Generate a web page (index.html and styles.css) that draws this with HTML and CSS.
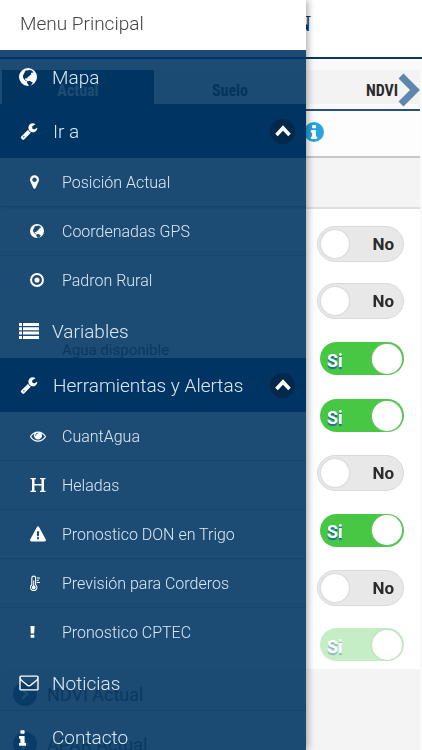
FILE: index.html
```
<!DOCTYPE html>
<html lang="es">
<head>
    <meta charset="UTF-8">
    <meta name="viewport" content="width=device-width, initial-scale=1.0">
    <title>Menu Principal</title>
    <link rel="stylesheet" href="styles.css">
</head>
<body>
    <svg class="sprite" aria-hidden="true">
        <symbol id="globe" viewBox="0 0 16 16"><path fill-rule="evenodd" d="M8 0a8 8 0 1 0 0 16A8 8 0 0 0 8 0zM9.600 1.700l1.700.6 1.600 1.400-.6.5-1-.1-.7.9.6.7-1.200.4-.8 1.200-1.300.5-.6 1 .1 1-.7-.7-1.200.1-.2 1.200 1 .3.6.9 1.100.2 1.500-.4 1.800 1 .9.3-.5 1.200-.8 1.100-2.200.9-.6-1.400-1-1.100.1-1.300-1.500-.9-1.300-1.300-.9-2 .2-1.700L5 4.100l.2-1 1.300-1.200 1 .3z"/></symbol>
        <symbol id="wrench" viewBox="0 0 1792 1792"><path d="M448 1472q0-26-19-45t-45-19-45 19-19 45 19 45 45 19 45-19 19-45zm644-420l-682 682q-37 37-90 37-52 0-91-37l-106-108q-38-36-38-90 0-53 38-91l681-681q39 98 114.500 173.500t173.500 114.500zm634-435q0 39-23 106-47 134-164.500 217.500t-258.500 83.500q-185 0-316.500-131.500t-131.500-316.500 131.500-316.500 316.500-131.500q58 0 121.500 16.500t107.500 46.500q16 11 16 28t-16 28l-293 169v224l193 107q5-3 79-48.500t135.500-81 70.500-35.500q15 0 23.500 10t8.500 25z"/></symbol>
        <symbol id="marker" viewBox="384 128 1024 1536"><path d="M1152 640q0-106-75-181t-181-75-181 75-75 181 75 181 181 75 181-75 75-181zm256 0q0 109-33 179l-364 774q-16 33-47.500 52t-67.500 19-67.500-19-46.500-52l-365-774q-33-70-33-179 0-212 150-362t362-150 362 150 150 362z"/></symbol>
        <symbol id="target" viewBox="0 0 16 16"><circle cx="8" cy="8" r="6.800" fill="none" stroke="currentColor" stroke-width="2.300"/><circle cx="8" cy="8" r="2.900"/></symbol>
        <symbol id="list" viewBox="0 0 20 16"><path d="M0 0h3v3H0zM4 0h16v3H4zM0 4.300h3v3H0zM4 4.300h16v3H4zM0 8.600h3v3H0zM4 8.600h16v3H4zM0 13h3v3H0zM4 13h16v3H4z"/></symbol>
        <symbol id="eye" viewBox="0 0 1792 1792"><path d="M1664 960q-152-236-381-353 61 104 61 225 0 185-131.500 316.500t-316.500 131.500-316.500-131.500-131.500-316.500q0-121 61-225-229 117-381 353 133 205 333.500 326.500t434.500 121.500 434.500-121.500 333.500-326.500zm-720-384q0-20-14-34t-34-14q-125 0-214.500 89.500t-89.500 214.500q0 20 14 34t34 14 34-14 14-34q0-86 61-147t147-61q20 0 34-14t14-34zm848 384q0 34-20 69-140 230-376.500 368.500t-499.500 138.500-499.500-139-376.500-368q-20-35-20-69t20-69q140-229 376.500-368t499.500-139 499.500 139 376.500 368q20 35 20 69z"/></symbol>
        <symbol id="frost" viewBox="0 0 16 16"><path d="M.5 1H6v1.300H4.500V7h7V2.300H10V1h5.500v1.300H14v11.400h1.500V15H10v-1.300h1.500V8.500h-7v5.200H6V15H.5v-1.300H2V2.300H.5z"/></symbol>
        <symbol id="warning" viewBox="0 0 16 16"><path fill-rule="evenodd" d="M8 .3q.7 0 1 .6l6.800 12.700q.5 1.700-1 1.800H1.200q-1.500-.1-1-1.800L7 .9q.3-.6 1-.6zM6.800 5.200l.3 5h1.800l.3-5zM7 11.200v2h2v-2z"/></symbol>
        <symbol id="thermometer" viewBox="0 0 10 16"><path d="M1.800 9.300V2.500a1.900 1.900 0 0 1 3.800 0v6.800a3.200 3.200 0 1 1-3.800 0z" fill="none" stroke="currentColor" stroke-width="1.100"/><circle cx="3.700" cy="12" r="1.900"/><path d="M3.200 5h1v6h-1zM6.700 2H10v1H6.700zM6.700 4.300H9v1H6.700zM6.700 6.600H10v1H6.700z"/></symbol>
        <symbol id="exclamation" viewBox="0 0 6 16"><path d="M.5.800h5l-.5 9H1zM.8 11.300h4.400V15H.8z"/></symbol>
        <symbol id="envelope" viewBox="0 128 1792 1664"><path d="M1664 1504v-768q-32 36-69 66-268 206-426 338-51 43-83 67t-86.500 48.500-102.500 24.500h-2q-48 0-102.500-24.500t-86.500-48.500-83-67q-158-132-426-338-37-30-69-66v768q0 13 9.500 22.500t22.500 9.500h1472q13 0 22.500-9.500t9.500-22.500zm0-1051v-24.500l-.5-13-3-12.500-5.500-9-9-7.500-14-2.500h-1472q-13 0-22.500 9.500t-9.500 22.500q0 168 147 284 193 152 401 317 6 5 35 29.500t46 37.500 44.500 31.500 50.500 27.500 43 9h2q20 0 43-9t50.500-27.500 44.500-31.500 46-37.500 35-29.500q208-165 401-317 54-43 100.500-115.500t46.500-131.500zm128-37v1088q0 66-47 113t-113 47h-1472q-66 0-113-47t-47-113v-1088q0-66 47-113t113-47h1472q66 0 113 47t47 113z"/></symbol>
        <symbol id="info" viewBox="576 128 640 1408"><path d="M1216 1344v128q0 26-19 45t-45 19h-512q-26 0-45-19t-19-45v-128q0-26 19-45t45-19h64v-384h-64q-26 0-45-19t-19-45v-128q0-26 19-45t45-19h384q26 0 45 19t19 45v576h64q26 0 45 19t19 45zm-128-1152v192q0 26-19 45t-45 19h-256q-26 0-45-19t-19-45v-192q0-26 19-45t45-19h256q26 0 45 19t19 45z"/></symbol>
        <symbol id="chevron-up" viewBox="0 0 16 12"><path d="M1.500 10L8 3l6.500 7" fill="none" stroke="currentColor" stroke-width="3.600"/></symbol>
        <symbol id="chevron-right" viewBox="0 0 22 34"><path d="M3 3l14 14L3 31" fill="none" stroke="currentColor" stroke-width="7"/></symbol>
    </svg>

    <div class="page">
        <header class="header"><h1 class="title">N</h1></header>
        <nav class="tabs">
            <button type="button" class="tab active">Actual</button>
            <button type="button" class="tab">Suelo</button>
            <button type="button" class="tab">NDVI</button>
            <button type="button" class="next" aria-label="Siguiente"><svg><use href="#chevron-right"/></svg></button>
        </nav>
        <div class="inforow"><button type="button" class="infobtn" aria-label="Ayuda"><svg><use href="#info"/></svg></button></div>
        <div class="band"></div>
        <form class="switches">
            <label class="switch"><input type="checkbox"><span class="state">No</span></label>
            <label class="switch"><input type="checkbox"><span class="state">No</span></label>
            <label class="switch on"><span class="name">Agua disponible</span><input type="checkbox" checked><span class="state">Si</span></label>
            <label class="switch on"><input type="checkbox" checked><span class="state">Si</span></label>
            <label class="switch"><input type="checkbox"><span class="state">No</span></label>
            <label class="switch on"><input type="checkbox" checked><span class="state">Si</span></label>
            <label class="switch"><input type="checkbox"><span class="state">No</span></label>
            <label class="switch on disabled"><input type="checkbox" checked disabled><span class="state">Si</span></label>
        </form>
        <div class="layers">
            <a class="layer" href="#ndvi"><span class="bullet"><svg><use href="#chevron-right"/></svg></span>NDVI Actual</a>
            <a class="layer" href="#apar"><span class="bullet"><svg><use href="#chevron-right"/></svg></span>APAR Actual</a>
        </div>
    </div>

    <aside class="drawer">
        <h2 class="drawertitle">Menu Principal</h2>
        <nav class="menu">
            <a class="item" href="#mapa"><svg class="icon round"><use href="#globe"/></svg>Mapa</a>
            <button type="button" class="item group" aria-expanded="true"><svg class="icon"><use href="#wrench"/></svg>Ir a<span class="toggle"><svg><use href="#chevron-up"/></svg></span></button>
            <div class="submenu">
                <a class="subitem" href="#posicion"><svg class="icon narrow"><use href="#marker"/></svg>Posición Actual</a>
                <a class="subitem" href="#coordenadas"><svg class="icon"><use href="#globe"/></svg>Coordenadas GPS</a>
                <a class="subitem" href="#padron"><svg class="icon"><use href="#target"/></svg>Padron Rural</a>
            </div>
            <a class="item" href="#variables"><svg class="icon"><use href="#list"/></svg>Variables</a>
            <button type="button" class="item group" aria-expanded="true"><svg class="icon"><use href="#wrench"/></svg>Herramientas y Alertas<span class="toggle"><svg><use href="#chevron-up"/></svg></span></button>
            <div class="submenu">
                <a class="subitem" href="#cuantagua"><svg class="icon wide"><use href="#eye"/></svg>CuantAgua</a>
                <a class="subitem" href="#heladas"><svg class="icon wide"><use href="#frost"/></svg>Heladas</a>
                <a class="subitem" href="#don"><svg class="icon wide"><use href="#warning"/></svg>Pronostico DON en Trigo</a>
                <a class="subitem" href="#corderos"><svg class="icon tall"><use href="#thermometer"/></svg>Previsión para Corderos</a>
                <a class="subitem" href="#cptec"><svg class="icon mark"><use href="#exclamation"/></svg>Pronostico CPTEC</a>
            </div>
            <a class="item" href="#noticias"><svg class="icon"><use href="#envelope"/></svg>Noticias</a>
            <a class="item line" href="#contacto"><svg class="icon narrow"><use href="#info"/></svg>Contacto</a>
        </nav>
    </aside>
</body>
</html>
```
FILE: styles.css
```
* { box-sizing: border-box; }
body { margin: 0; height: 100vh; overflow: hidden; background: #fafafa; font-family: Roboto, sans-serif; color: #2b2b2b; }
button { border: 0; padding: 0; background: none; font: inherit; color: inherit; }
a { color: inherit; text-decoration: none; }
svg { display: block; fill: currentColor; }
.sprite { display: none; }

/* page */
.header { height: 59px; border-bottom: 2px solid #003a66; background: #fff; display: flex; justify-content: center; }
.title { width: 200px; margin: 0; text-align: right; font: bold 24px/46px "Liberation Serif", serif; color: #0d3a63; }
.tabs { position: relative; display: flex; margin: 0 2px; padding: 11px 0 5px; border-bottom: 2px solid #28527c; overflow: hidden; }
.tab { flex: 0 0 152px; height: 34px; padding-top: 6px; background: #f3f3f3; font: bold 16px "Roboto Condensed", Roboto, sans-serif; }
.tab.active { background: #003a66; color: #fff; }
.next { position: absolute; right: 0; top: 14px; color: #5d87ad; }
.next svg { width: 22px; height: 34px; }
.inforow { margin: 0 2px; height: 47px; padding: 11px 0 0 302px; border-bottom: 2px solid #c8c8c8; background: #fdfdfd; }
.infobtn { display: flex; align-items: center; justify-content: center; width: 20px; height: 20px; border-radius: 50%; background: #27a5dc; color: #fff; }
.infobtn svg { width: 8px; height: 14px; }
.band { margin: 0 2px; height: 51px; background: #f4f4f4; border-bottom: 2px solid #dedede; }
.switches { display: flex; flex-direction: column; justify-content: space-between; min-height: 460px; margin: 0 2px; padding: 17px 16px 6px 60px; background: #fff; }
.switch { display: grid; grid-template-columns: 1fr 87px; align-items: center; justify-items: end; height: 36px; font-size: 17px; font-weight: bold; }
.switch input { grid-area: 1 / 2; appearance: none; display: flex; align-items: center; width: 87px; height: 36px; margin: 0; padding: 0 3px; border: 1px solid #dadada; border-radius: 18px; background: #e8e8e8; }
.switch input::before { content: ""; width: 28px; height: 28px; border-radius: 50%; background: #fff; box-shadow: 0 0 2px #bbb; }
.switch input:checked { justify-content: flex-end; width: 84px; height: 33px; padding: 0 2px; border: 0; background: #48c744; }
.switch input:checked::before { width: 30px; height: 30px; }
.state { grid-area: 1 / 2; z-index: 1; padding-right: 10px; }
.on .state { justify-self: start; padding: 3px 0 0 10px; color: #fff; font-size: 18px; text-shadow: 0 2px 1px #1c6aa0; }
.disabled input:checked { background: #c6eec5; }
.disabled .state { text-shadow: 0 2px 1px #8db8c4; }
.name { grid-area: 1 / 1; justify-self: start; align-self: start; font-size: 15px; font-weight: normal; color: #555; }
.layers { margin: 0 2px; background: #f4f4f4; }
.layer { display: flex; align-items: center; gap: 10px; height: 50px; padding-left: 11px; font-size: 18px; color: #555; }
.bullet { display: flex; align-items: center; justify-content: center; width: 24px; height: 24px; border-radius: 50%; background: #47719a; color: #fff; }
.bullet svg { width: 8px; height: 12px; }

/* drawer */
.drawer { position: fixed; top: 0; bottom: 0; left: 0; width: 306px; overflow: hidden; background: rgba(0, 53, 98, 0.89); box-shadow: 1px 0 8px rgba(0, 0, 0, 0.4); color: #dce9f5; font-weight: 300; }
.drawertitle { margin: 0; height: 50px; padding-left: 20px; background: #fff; color: #444; font-size: 19px; font-weight: 300; line-height: 47px; }
.item { display: flex; align-items: center; gap: 13px; width: 100%; height: 54px; padding: 0 11px 0 19px; font-size: 19px; text-align: left; }
.group { background: #003463; gap: 14px; }
.line { border-top: 1px solid #174469; }
.icon { width: 20px; height: 18px; color: #fff; }
.round { padding-right: 2px; }
.item .narrow { padding-right: 13px; width: 20px; }
.toggle { display: flex; align-items: center; justify-content: center; width: 25px; height: 25px; margin-left: auto; border-radius: 50%; background: #04284a; color: #fff; }
.toggle svg { width: 16px; height: 12px; }
.subitem { display: flex; align-items: center; height: 48px; padding-left: 30px; font-size: 16px; }
.subitem + .subitem { height: 49px; border-top: 1px solid #174469; }
.subitem .icon { width: 14px; height: 14px; margin-right: 18px; }
.subitem .narrow { width: 9px; margin-right: 23px; }
.subitem .wide { width: 16px; height: 16px; margin-right: 16px; }
.subitem .tall { width: 10px; height: 17px; margin-right: 22px; }
.subitem .mark { width: 5px; margin-right: 27px; }
```
